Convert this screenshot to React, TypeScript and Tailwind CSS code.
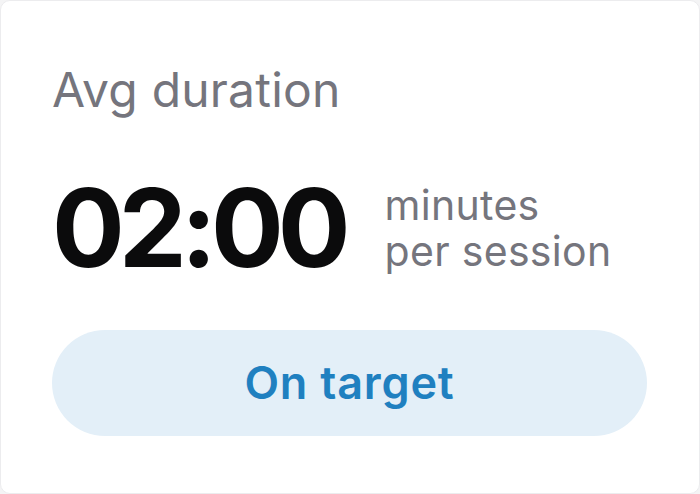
export default function App() {
  return (
    <div className="h-[494px] w-[700px] bg-[#f4f4f5]">
      <div
        className="flex h-full flex-col rounded-[10px] border border-[#ececee] bg-white px-[51px] pt-[65px]"
        style={{ fontFamily: "Inter, 'Noto Sans', sans-serif" }}
      >
        <h2 className="text-[48px] leading-none font-normal tracking-[0.2px] text-[#75757d]">
          Avg duration
        </h2>

        <div className="mt-[60px] flex items-center gap-[40px]">
          <span className="text-[108px] leading-none font-bold tracking-[-6px] text-[#0b0b0c]">
            02:00
          </span>
          <div className="text-[41px] leading-[46px] tracking-[0.3px] text-[#75757d]">
            <div>minutes</div>
            <div>per session</div>
          </div>
        </div>

        <div className="mt-[48px] flex h-[106px] w-[595px] items-center justify-center rounded-full bg-[#e3eff8]">
          <span className="text-[45px] font-semibold tracking-[0.8px] text-[#1f80c0]">
            On target
          </span>
        </div>
      </div>
    </div>
  );
}
